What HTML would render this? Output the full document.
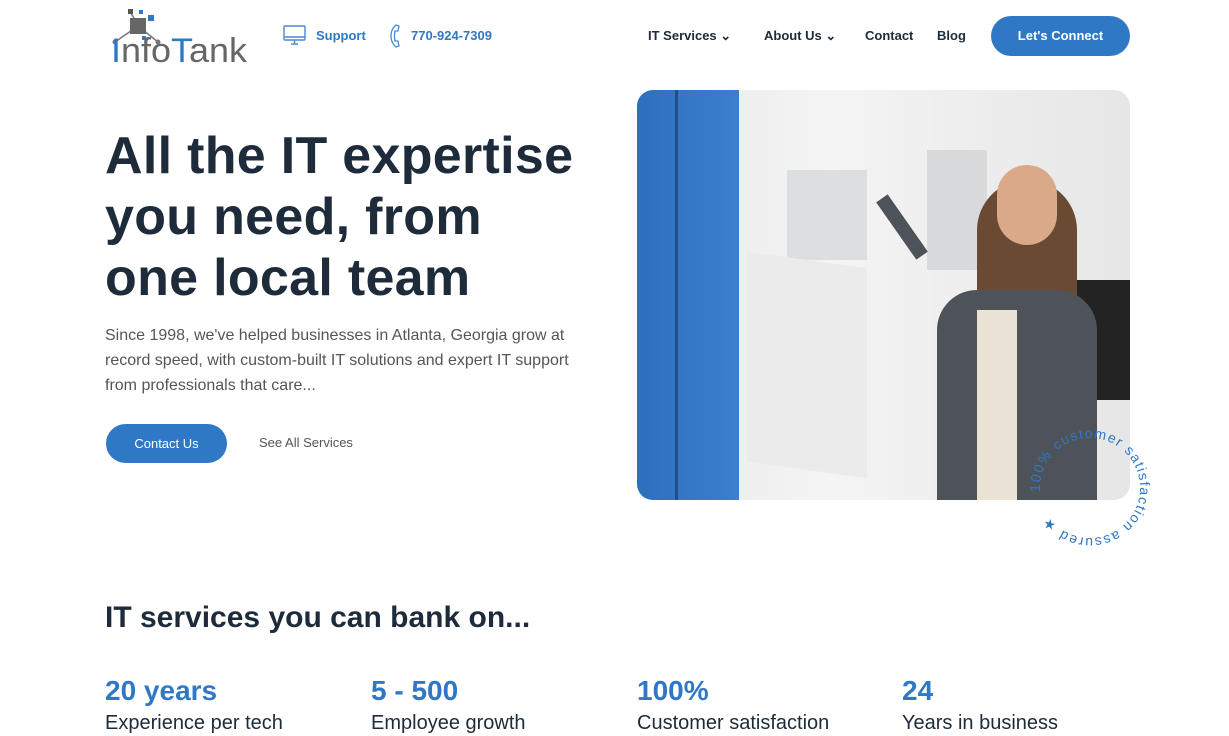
<!DOCTYPE html>
<html><head><meta charset="utf-8"><style>
*{margin:0;padding:0;box-sizing:border-box}
body{width:1229px;height:736px;overflow:hidden;background:#fff;font-family:"Liberation Sans",sans-serif;position:relative;color:#1d2b3a}
.a{position:absolute}
.nav{font-size:13px;font-weight:bold;color:#1d2b3a}
.blue{color:#2f78c6}
h1{position:absolute;left:105px;top:126px;font-size:52px;line-height:61px;font-weight:bold;color:#1d2b3a;letter-spacing:0.3px}
.p{left:105px;top:323px;width:470px;font-size:16px;line-height:25px;color:#555}
.stat{font-size:28px;font-weight:bold;color:#2f78c6}
.lab{font-size:20px;color:#1d2b3a}
</style></head><body>
<svg class="a" style="left:108px;top:6px" width="145" height="60" viewBox="0 0 145 60">
<g stroke="#777" stroke-width="1.5" fill="none"><line x1="30" y1="20" x2="7" y2="36"/><line x1="30" y1="20" x2="50" y2="36"/><line x1="26" y1="12" x2="22" y2="6"/></g>
<rect x="22" y="12" width="16" height="16" fill="#666"/>
<rect x="20" y="3" width="5" height="5" fill="#555"/><rect x="31" y="4" width="4" height="4" fill="#2f78c6"/><rect x="40" y="9" width="6" height="6" fill="#2f78c6"/><rect x="34" y="30" width="4" height="4" fill="#2f78c6"/>
<circle cx="7" cy="36" r="2.5" fill="#777"/><circle cx="50" cy="36" r="2.5" fill="#777"/>
<text x="3" y="56" font-family="Liberation Sans" font-size="34" fill="#666" textLength="136" lengthAdjust="spacingAndGlyphs"><tspan fill="#2f78c6">I</tspan>nfo<tspan fill="#2f78c6">T</tspan>ank</text>
</svg>
<svg class="a" style="left:283px;top:25px" width="23" height="21" viewBox="0 0 23 21" fill="none" stroke="#4a8ad4" stroke-width="1.4"><rect x="1" y="1" width="21" height="14" rx="1"/><line x1="1" y1="12" x2="22" y2="12"/><line x1="8" y1="19" x2="15" y2="19"/><line x1="11.5" y1="15" x2="11.5" y2="19"/></svg>
<div class="a nav blue" style="left:316px;top:28px">Support</div>
<svg class="a" style="left:390px;top:24px" width="12" height="24" viewBox="0 0 12 24" fill="none" stroke="#4a8ad4" stroke-width="1.3"><path d="M6 1 L9 2 L8 7 L5 7 Q4 12 5 17 L8 17 L9 22 L6 23 Q1 19 1 12 Q1 5 6 1Z"/></svg>
<div class="a nav blue" style="left:411px;top:28px">770-924-7309</div>
<div class="a nav" style="left:648px;top:28px">IT Services ⌄</div>
<div class="a nav" style="left:764px;top:28px">About Us ⌄</div>
<div class="a nav" style="left:865px;top:28px">Contact</div>
<div class="a nav" style="left:937px;top:28px">Blog</div>
<div class="a" style="left:991px;top:16px;width:139px;height:40px;border-radius:20px;background:#2f78c6;color:#fff;font-size:13px;font-weight:bold;text-align:center;line-height:40px">Let's Connect</div>
<h1>All the IT expertise<br>you need, from<br>one local team</h1>
<div class="a p">Since 1998, we've helped businesses in Atlanta, Georgia grow at record speed, with custom-built IT solutions and expert IT support from professionals that care...</div>
<div class="a" style="left:106px;top:424px;width:121px;height:39px;border-radius:20px;background:#2f78c6;color:#fff;font-size:13px;text-align:center;line-height:39px">Contact Us</div>
<div class="a" style="left:259px;top:435px;font-size:13px;color:#555">See All Services</div>
<div class="a" style="left:637px;top:90px;width:493px;height:410px;border-radius:16px;overflow:hidden;background:linear-gradient(90deg,#e8eaec,#f4f4f4 40%,#e6e6e6)">
<div class="a" style="left:0;top:0;width:102px;height:410px;background:linear-gradient(90deg,#2d6fbd,#3a80cf)"></div>
<div class="a" style="left:38px;top:0;width:3px;height:410px;background:#1e4f8c"></div>
<div class="a" style="left:150px;top:80px;width:80px;height:90px;background:#dcdedf"></div>
<div class="a" style="left:290px;top:60px;width:60px;height:120px;background:#d8dadb"></div>
<div class="a" style="left:110px;top:170px;width:120px;height:210px;background:#ebebeb;transform:skewY(8deg)"></div>
<div class="a" style="left:420px;top:190px;width:80px;height:120px;background:#222"></div>
<div class="a" style="left:340px;top:90px;width:100px;height:180px;border-radius:50px 50px 20px 20px;background:#6b4a33"></div>
<div class="a" style="left:300px;top:200px;width:160px;height:210px;border-radius:40px 40px 0 0;background:#4d5358"></div>
<div class="a" style="left:340px;top:220px;width:40px;height:190px;background:#e9e3d6"></div>
<div class="a" style="left:360px;top:75px;width:60px;height:80px;border-radius:30px;background:#d9a98a"></div>
<div class="a" style="left:230px;top:130px;width:70px;height:14px;background:#4d5358;transform:rotate(55deg)"></div>
</div>
<svg class="a" style="left:1025px;top:423px" width="130" height="130" viewBox="0 0 130 130">
<defs><path id="c" d="M65,65 m-50,0 a50,50 0 1,1 100,0 a50,50 0 1,1 -100,0"/></defs>
<text font-family="Liberation Sans" font-size="14" fill="#2f78c6" letter-spacing="1.3"><textPath href="#c" startOffset="-4">100% customer satisfaction assured ★</textPath></text>
</svg>
<div class="a" style="left:105px;top:601px;font-size:30px;font-weight:bold;color:#1d2b3a">IT services you can bank on...</div>
<div class="a stat" style="left:105px;top:675px">20 years</div><div class="a lab" style="left:105px;top:712px">Experience per tech</div>
<div class="a stat" style="left:371px;top:675px">5 - 500</div><div class="a lab" style="left:371px;top:712px">Employee growth</div>
<div class="a stat" style="left:637px;top:675px">100%</div><div class="a lab" style="left:637px;top:712px">Customer satisfaction</div>
<div class="a stat" style="left:902px;top:675px">24</div><div class="a lab" style="left:902px;top:712px">Years in business</div>
</body></html>
